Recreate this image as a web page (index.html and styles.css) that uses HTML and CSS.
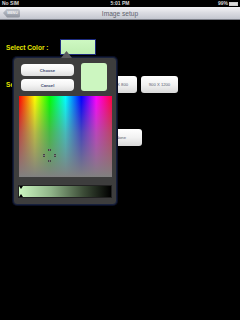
FILE: index.html
```html
<!DOCTYPE html>
<html>
<head>
<meta charset="utf-8">
<link rel="stylesheet" href="styles.css">
</head>
<body>
<div class="screen">
  <div class="status">
    <span class="st-left">No SIM</span>
    <span class="st-mid">5:01 PM</span>
    <span class="st-right">99% <span class="battery"><span class="battery-fill"></span></span></span>
  </div>
  <div class="navbar">
    <div class="back"><span>MENU</span></div>
    <div class="title">Image setup</div>
    <div></div>
  </div>
  <div class="content">
    <div class="row row-color">
      <span class="label">Select Color :</span>
      <div class="swatch"></div>
    </div>
    <div class="row row-size">
      <span class="label label-size">Se</span>
      <div class="btns">
        <div class="opt opt-a">600 X 800</div>
        <div class="opt opt-b">900 X 1200</div>
      </div>
    </div>
    <div class="row row-bg">
      <span class="label"></span>
      <div class="btns">
        <div class="opt opt-c">None</div>
      </div>
    </div>
  </div>

  <div class="popover">
    <div class="arrow"></div>
    <div class="pop-top">
      <div class="pop-btns">
        <div class="pbtn">Choose</div>
        <div class="pbtn">Cancel</div>
      </div>
      <div class="pop-swatch"></div>
    </div>
    <div class="spectrum">
      <div class="spectrum-shade"></div>
      <svg class="marker" width="13" height="13" viewBox="0 0 13 13">
        <rect x="5" y="0" width="3" height="2" fill="#111"/>
        <rect x="5" y="11" width="3" height="2" fill="#111"/>
        <rect x="0" y="5" width="2" height="3" fill="#111"/>
        <rect x="11" y="5" width="2" height="3" fill="#111"/>
        <rect x="5.5" y="0.5" width="2" height="1" fill="#ddd"/>
        <rect x="5.5" y="11.5" width="2" height="1" fill="#ddd"/>
        <rect x="0.5" y="5.5" width="1" height="2" fill="#ddd"/>
        <rect x="11.5" y="5.5" width="1" height="2" fill="#ddd"/>
      </svg>
    </div>
    <div class="lumbar">
      <svg class="lum-mark lum-top" width="4" height="3" viewBox="0 0 4 3"><polygon points="0,0 4,0 2,3" fill="#000"/></svg>
      <svg class="lum-mark lum-bot" width="4" height="3" viewBox="0 0 4 3"><polygon points="0,3 4,3 2,0" fill="#000"/></svg>
    </div>
  </div>
</div>
</body>
</html>
```
FILE: styles.css
```css
* { box-sizing: border-box; }
html, body {
  margin: 0;
  padding: 0;
  background: #000;
}
body {
  font-family: "Liberation Sans", Arial, sans-serif;
  width: 240px;
  height: 320px;
  overflow: hidden;
}
.screen {
  position: relative;
  width: 240px;
  height: 320px;
  background: #000;
}
.status {
  height: 7px;
  display: grid;
  grid-template-columns: 1fr auto 1fr;
  align-items: center;
  padding: 0 2px;
  color: #d8d8d8;
  font-size: 5px;
  font-weight: bold;
  line-height: 7px;
}
.st-mid { text-align: center; }
.st-right {
  display: flex;
  justify-content: flex-end;
  align-items: center;
  gap: 1px;
}
.battery {
  display: inline-block;
  width: 9px;
  height: 4px;
  border: 1px solid #ccc;
  position: relative;
}
.battery-fill {
  display: block;
  width: 100%;
  height: 100%;
  background: #ddd;
}
.navbar {
  height: 13px;
  display: grid;
  grid-template-columns: 1fr auto 1fr;
  align-items: center;
  background: linear-gradient(#f4f4f7 0%, #dcdde3 45%, #c4c7d0 100%);
  border-bottom: 1px solid #7c7f88;
}
.back {
  margin-left: 3px;
  width: 17px;
  height: 9px;
  background: linear-gradient(#c4c8d0, #8c919c);
  clip-path: polygon(0 50%, 4px 0, 100% 0, 100% 100%, 4px 100%);
  border-radius: 2px;
  display: flex;
  align-items: center;
  justify-content: center;
  padding-left: 2px;
}
.back span {
  color: #f4f4f4;
  font-size: 3.6px;
  font-weight: bold;
}
.title {
  color: #60646e;
  font-size: 6.6px;
  text-align: center;
}
.content {
  padding: 19px 0 0 6px;
  display: flex;
  flex-direction: column;
}
.row {
  display: flex;
  align-items: center;
}
.label {
  color: #e4e400;
  font-size: 6.6px;
  font-weight: bold;
}
.row-color { height: 16px; }
.row-color .label { width: 54px; }
.swatch {
  width: 36px;
  height: 16px;
  background: linear-gradient(#cef8c2, #bfeeb2);
  border: 1px solid #1c2a7c;
}
.row-size {
  margin-top: 21px;
  height: 17px;
}
.row-size .label { width: 94px; }
.btns {
  display: flex;
  gap: 4px;
}
.opt {
  width: 37px;
  height: 17px;
  border-radius: 3px;
  background: linear-gradient(#ffffff, #f2f2f2 50%, #d8d8d8);
  color: #5a6070;
  font-size: 4.2px;
  display: flex;
  align-items: center;
  justify-content: center;
}
.row-bg {
  margin-top: 36px;
  height: 17px;
}
.row-bg .label { width: 94px; }
.opt-c {
  width: 42px;
}
.popover {
  position: absolute;
  left: 13px;
  top: 57px;
  width: 104px;
  height: 148px;
  background: #3d3d3d;
  border: 1px solid #17203c;
  border-radius: 4px;
  padding: 5px 5px 0 5px;
  display: flex;
  flex-direction: column;
  box-shadow: 0 0 0 1px #0a0f24;
}
.arrow {
  position: absolute;
  left: 47px;
  top: -7px;
  width: 11px;
  height: 7px;
  background: #5b5b5f;
  clip-path: polygon(50% 0, 100% 100%, 0 100%);
}
.pop-top {
  display: flex;
  gap: 7px;
  margin-left: 2px;
  height: 28px;
}
.pop-btns {
  display: flex;
  flex-direction: column;
  gap: 3px;
  margin-top: 1px;
}
.pbtn {
  width: 53px;
  height: 12px;
  border-radius: 4px;
  background: linear-gradient(#ffffff, #f4f4f4 50%, #dedede);
  color: #3d4a6e;
  font-size: 4.2px;
  font-weight: bold;
  display: flex;
  align-items: center;
  justify-content: center;
}
.pop-swatch {
  width: 26px;
  height: 28px;
  border-radius: 3px;
  background: #ccf6c0;
}
.spectrum {
  position: relative;
  margin-top: 5px;
  width: 93px;
  height: 81px;
  background: linear-gradient(to right, #ff0000 0%, #ffff00 17%, #00ff00 33%, #00ffff 50%, #0000ff 67%, #ff00ff 83%, #ff0040 100%);
}
.spectrum-shade {
  position: absolute;
  inset: 0;
  background: linear-gradient(to bottom, rgba(128,128,128,0) 0%, rgba(128,128,128,0.55) 45%, #808080 100%);
}
.marker {
  position: absolute;
  left: 24px;
  top: 53px;
}
.lumbar {
  position: relative;
  margin-top: 8px;
  margin-left: -1px;
  width: 94px;
  height: 13px;
  background: linear-gradient(to right, #ccf6c0 0%, #8fb488 35%, #3c4c37 70%, #000 100%);
  border: 1px solid #222;
}
.lum-mark {
  position: absolute;
  left: 0;
}
.lum-top { top: 0; }
.lum-bot { bottom: 0; }
```
